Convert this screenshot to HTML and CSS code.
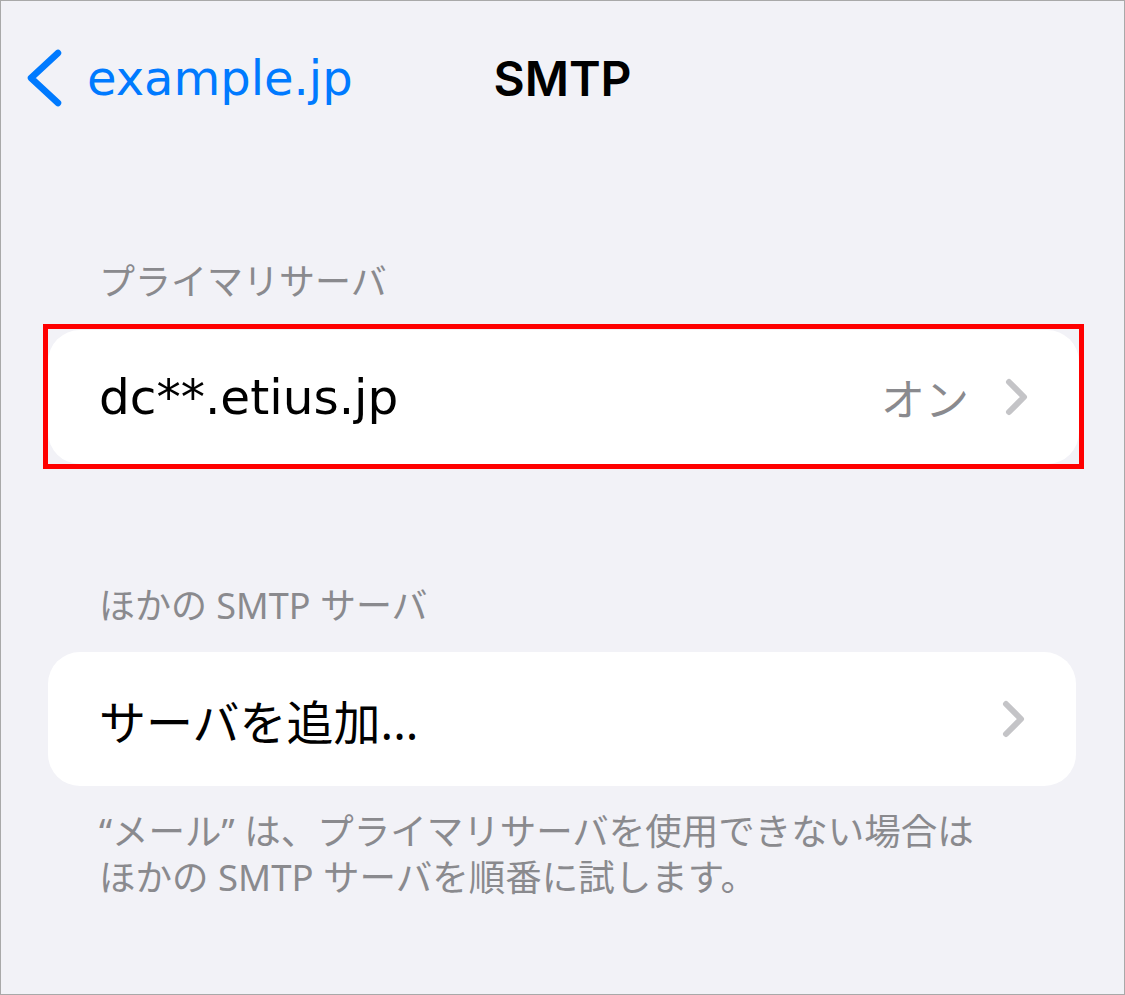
FILE: index.html
```html
<!DOCTYPE html>
<html lang="ja">
<head>
    <meta charset="UTF-8">
    <meta name="viewport" content="width=device-width, initial-scale=1.0">
    <title>SMTP</title>
    <link rel="stylesheet" href="styles.css">
</head>
<body>
    <div class="screen">
        <!-- Navigation bar -->
        <div class="nav">
            <a class="back" href="#">
                <svg class="back-icon" width="40" height="60" viewBox="0 0 40 60">
                    <path d="M34 5 L7 30 L34 55" fill="none" stroke="#007aff" stroke-width="6.5" stroke-linecap="round" stroke-linejoin="round"/>
                </svg>
                <span>example.jp</span>
            </a>
            <div class="title">SMTP</div>
            <div></div>
        </div>

        <div class="section-header first">プライマリサーバ</div>
        <div class="highlight">
            <div class="card">
                <span class="label latin">dc**.etius.jp</span>
                <span class="value">オン</span>
                <svg class="chevron" width="24" height="40" viewBox="0 0 24 40">
                    <path d="M4 5 L19 20 L4 35" fill="none" stroke="#c4c4c7" stroke-width="6" stroke-linecap="round" stroke-linejoin="round"/>
                </svg>
            </div>
        </div>

        <div class="section-header">ほかの SMTP サーバ</div>
        <div class="card">
            <span class="label">サーバを追加...</span>
            <svg class="chevron" width="24" height="40" viewBox="0 0 24 40">
                <path d="M4 5 L19 20 L4 35" fill="none" stroke="#c4c4c7" stroke-width="6" stroke-linecap="round" stroke-linejoin="round"/>
            </svg>
        </div>
        <div class="footer">“メール” は、プライマリサーバを使用できない場合は<br>ほかの SMTP サーバを順番に試します。</div>
    </div>
</body>
</html>
```

FILE: styles.css
```css
body {
    margin: 0;
    background: #f2f2f7;
    font-family: "Noto Sans", "Noto Sans CJK JP", sans-serif;
}

.screen {
    height: 995px;
    box-sizing: border-box;
    border: 1px solid #a9a9a9;
    background: #f2f2f7;
}

/* Navigation bar */
.nav {
    display: grid;
    grid-template-columns: 1fr auto 1fr;
    align-items: center;
    height: 154px;
}

.back {
    display: flex;
    align-items: center;
    gap: 23px;
    padding-left: 23px;
    color: #007aff;
    text-decoration: none;
    font-family: "DejaVu Sans", "Noto Sans CJK JP", sans-serif;
    font-size: 48px;
}

.title {
    font-family: Inter, "Noto Sans", sans-serif;
    font-weight: 600;
    font-size: 48px;
    color: #000;
}

/* Sections */
.section-header {
    margin: 113px 0 0 98px;
    font-size: 36px;
    color: #8a8a8e;
    line-height: 48px;
}

.section-header.first {
    margin-top: 103px;
}

.highlight {
    margin: 18px 40px 0 42px;
    border: 5px solid #ff0000;
    padding: 1px 0 0 0;
}

.highlight .card {
    margin: 0;
}

.card {
    display: flex;
    align-items: center;
    height: 134px;
    margin: 22px 48px 0 47px;
    padding: 0 50px 0 51px;
    background: #fff;
    border-radius: 32px;
}

.label {
    flex: 1;
    font-size: 47px;
    color: #000;
}

.label.latin {
    font-family: "DejaVu Sans", "Noto Sans CJK JP", sans-serif;
    font-size: 48.5px;
}

.value {
    font-size: 44px;
    color: #8a8a8e;
    margin-right: 36px;
}

.footer {
    margin: 22px 0 0 98px;
    font-size: 36.5px;
    line-height: 46px;
    color: #8a8a8e;
}
```
